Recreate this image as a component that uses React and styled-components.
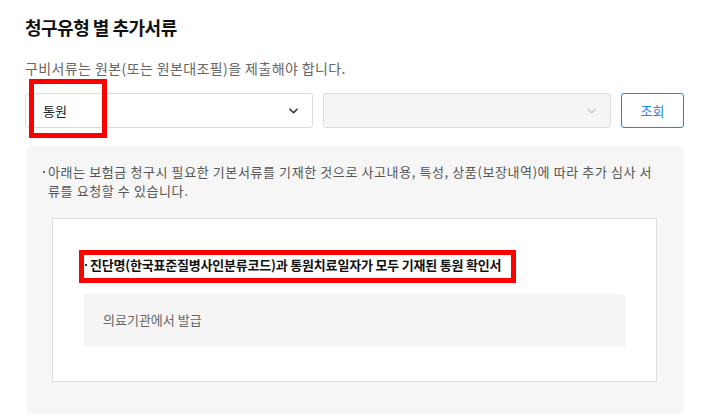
import React from 'react'
import styled, { createGlobalStyle } from 'styled-components'

const Global = createGlobalStyle`
  body {
    margin: 0;
    background: #fff;
    font-family: "Noto Sans CJK KR", "Noto Sans", sans-serif;
    color: #222;
  }
`

const Page = styled.div`
  width: 659px;
  padding: 14px 22px 0 25px;
`

const Title = styled.h2`
  margin: 0;
  font-size: 18px;
  line-height: 26px;
  font-weight: 700;
  letter-spacing: -0.5px;
  color: #111;
`

const Notice = styled.p`
  margin: 18px 0 0;
  font-size: 14px;
  line-height: 20px;
  letter-spacing: 0.4px;
  color: #666;
`

const Row = styled.div`
  display: flex;
  gap: 10px;
  margin-top: 15px;
  height: 35px;
`

const SelectBox = styled.div`
  position: relative;
  flex: 0 0 288px;
  box-sizing: border-box;
  display: flex;
  align-items: center;
  justify-content: space-between;
  padding: 0 14px 0 17px;
  border: 1px solid #ddd;
  border-radius: 3px;
  background: ${p => (p.$disabled ? '#f5f5f5' : '#fff')};
  font-size: 13px;
  color: #222;
`

const Chevron = ({ color }) => (
  <svg width="9" height="6" viewBox="0 0 9 6">
    <path d="M1 1.2l3.5 3.5 3.5-3.5" fill="none" stroke={color} strokeWidth="1.6" strokeLinecap="round" strokeLinejoin="round" />
  </svg>
)

const Button = styled.button`
  flex: 0 0 63px;
  box-sizing: border-box;
  border: 1px solid #1e88e0;
  border-radius: 3px;
  background: #fff;
  color: #1e88e0;
  font-family: inherit;
  font-size: 13px;
  padding: 0;
`

const Mark = styled.div`
  position: absolute;
  box-sizing: border-box;
  border: 5px solid #ff0000;
  pointer-events: none;
  left: ${p => p.$l}px;
  top: ${p => p.$t}px;
  width: ${p => p.$w}px;
  height: ${p => p.$h}px;
`

const Panel = styled.div`
  margin-top: 18px;
  margin-left: 1px;
  background: #f6f6f6;
  border-radius: 6px;
  padding: 16px 27px 32px 26px;
`

const Guide = styled.p`
  position: relative;
  margin: 0 0 0 -9px;
  padding-left: 5px;
  font-size: 13px;
  line-height: 19px;
  letter-spacing: 0.6px;
  color: #555;

  &::before {
    content: '';
    position: absolute;
    left: 0;
    top: 9px;
    width: 2px;
    height: 2px;
    background: #666;
  }
`

const Card = styled.div`
  margin-top: 18px;
  border: 1px solid #ddd;
  background: #fff;
  padding: 36px 30px 35px 31px;
`

const DocTitle = styled.div`
  position: relative;
  padding-left: 6px;
  font-size: 13px;
  line-height: 20px;
  font-weight: 700;
  letter-spacing: -0.2px;
  color: #111;

  &::before {
    content: '';
    position: absolute;
    left: 1px;
    top: 9px;
    width: 2px;
    height: 2px;
    background: #333;
  }
`

const Issuer = styled.div`
  margin-top: 19px;
  background: #f5f5f5;
  border-radius: 4px 4px 0 0;
  padding: 16px 19px;
  font-size: 13px;
  line-height: 20px;
  color: #666;
`

export default function App() {
  return (
    <Page>
      <Global />
      <Title>청구유형 별 추가서류</Title>
      <Notice>구비서류는 원본(또는 원본대조필)을 제출해야 합니다.</Notice>
      <Row>
        <SelectBox>
          <span>통원</span>
          <Chevron color="#333" />
          <Mark $l={3} $t={-15} $w={78} $h={59} />
        </SelectBox>
        <SelectBox $disabled>
          <span />
          <Chevron color="#ccc" />
        </SelectBox>
        <Button>조회</Button>
      </Row>
      <Panel>
        <Guide>
          아래는 보험금 청구시 필요한 기본서류를 기재한 것으로 사고내용, 특성, 상품(보장내역)에 따라 추가 심사 서류를 요청할 수 있습니다.
        </Guide>
        <Card>
          <DocTitle>
            진단명(한국표준질병사인분류코드)과 통원치료일자가 모두 기재된 통원 확인서
            <Mark $l={-5} $t={-5} $w={437} $h={33} />
          </DocTitle>
          <Issuer>의료기관에서 발급</Issuer>
        </Card>
      </Panel>
    </Page>
  )
}
